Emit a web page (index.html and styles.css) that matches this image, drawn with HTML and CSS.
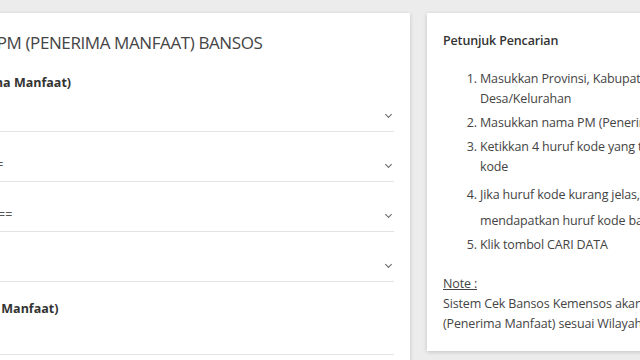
FILE: index.html
```html
<!DOCTYPE html>
<html lang="id">
<head>
    <meta charset="UTF-8">
    <meta name="viewport" content="width=device-width, initial-scale=1.0">
    <title>Cek Bansos</title>
    <link rel="stylesheet" href="styles.css">
</head>
<body>
    <div class="page">
        <div class="card card-form">
            <h2 class="form-title">
                <svg class="title-icon" viewBox="0 0 24 24" width="22" height="22"><circle cx="10" cy="10" r="6.5" fill="none" stroke="#444" stroke-width="2"/><path d="M15 15l6 6" stroke="#444" stroke-width="2.4" stroke-linecap="round"/></svg>CARI DATA PM (PENERIMA MANFAAT) BANSOS
            </h2>
            <label class="field-label">Wilayah PM (Penerima Manfaat)</label>
            <div class="select-row"><span>==PILIH PROVINSI==</span><span class="chevron"></span></div>
            <div class="select-row"><span>==PILIH KABUPATEN==</span><span class="chevron"></span></div>
            <div class="select-row"><span>== PILIH KECAMATAN ==</span><span class="chevron"></span></div>
            <div class="select-row"><span>==PILIH DESA==</span><span class="chevron"></span></div>
            <label class="field-label label-nama">Nama PM (Penerima Manfaat)</label>
            <div class="text-input"></div>
        </div>

        <div class="card card-help">
            <div class="help-title">Petunjuk Pencarian</div>
            <ol class="steps">
                <li>Masukkan Provinsi, Kabupaten, Kecamatan dan<br>Desa/Kelurahan</li>
                <li>Masukkan nama PM (Penerima Manfaat) sesuai KTP</li>
                <li>Ketikkan 4 huruf kode yang tertera dalam kotak<br>kode</li>
                <li>Jika huruf kode kurang jelas, klik icon <span class="refresh-icon"></span> untuk<br>mendapatkan huruf kode baru</li>
                <li>Klik tombol CARI DATA</li>
            </ol>
            <div class="note">Note :</div>
            <p class="note-text">Sistem Cek Bansos Kemensos akan menampilkan data PM<br>(Penerima Manfaat) sesuai Wilayah dan Nama yang ditulis.</p>
        </div>
    </div>
</body>
</html>
```
FILE: styles.css
```css
:root {
    --text-color: #444;
    --line-color: #e3e3e3;
}

body {
    margin: 0;
    background-color: #ececec;
    font-family: "Open Sans", Arial, sans-serif;
    color: var(--text-color);
    overflow: hidden;
    height: 360px;
}

.page {
    display: flex;
    align-items: flex-start;
    gap: 17px;
    padding-top: 13px;
    margin-left: -150px;
}

.card {
    background: #fff;
    box-shadow: 0 1px 4px rgba(0, 0, 0, 0.18);
    flex-shrink: 0;
}

.card-form {
    width: 524px;
    height: 400px;
    padding: 18px 16px 0 20px;
}

.form-title {
    display: flex;
    align-items: center;
    height: 24px;
    margin: 0 0 18px;
    font-size: 17px;
    font-weight: 400;
    letter-spacing: -0.4px;
    line-height: 24px;
    white-space: nowrap;
}

.title-icon {
    flex-shrink: 0;
    margin-right: 20px;
}

.field-label {
    display: block;
    font-size: 12.5px;
    font-weight: 700;
    line-height: 20px;
    color: #333;
}

.select-row {
    display: flex;
    align-items: center;
    justify-content: space-between;
    height: 33px;
    margin-top: 16px;
    border-bottom: 1px solid var(--line-color);
    font-size: 12.5px;
    color: #555;
    white-space: nowrap;
}

.select-row:first-of-type {
    margin-top: 5px;
}

.chevron {
    width: 4px;
    height: 4px;
    margin-right: 3px;
    border-right: 1px solid #666;
    border-bottom: 1px solid #666;
    transform: rotate(45deg);
}

.label-nama {
    margin-top: 17px;
}

.text-input {
    height: 33px;
    margin-top: 2px;
    border-bottom: 1px solid var(--line-color);
}

.card-help {
    width: 380px;
    padding: 18px 16px 17px;
    font-size: 12.5px;
    letter-spacing: -0.15px;
    line-height: 20px;
    white-space: nowrap;
}

.help-title {
    color: #333;
    font-weight: 600;
}

.steps {
    margin: 18px 0 19px;
    padding-left: 37px;
}

.steps li {
    margin-bottom: 4px;
}

.refresh-icon {
    display: inline-block;
    width: 22px;
    height: 30px;
    vertical-align: middle;
}

.note {
    text-decoration: underline;
}

.note-text {
    margin: 0;
}
```
